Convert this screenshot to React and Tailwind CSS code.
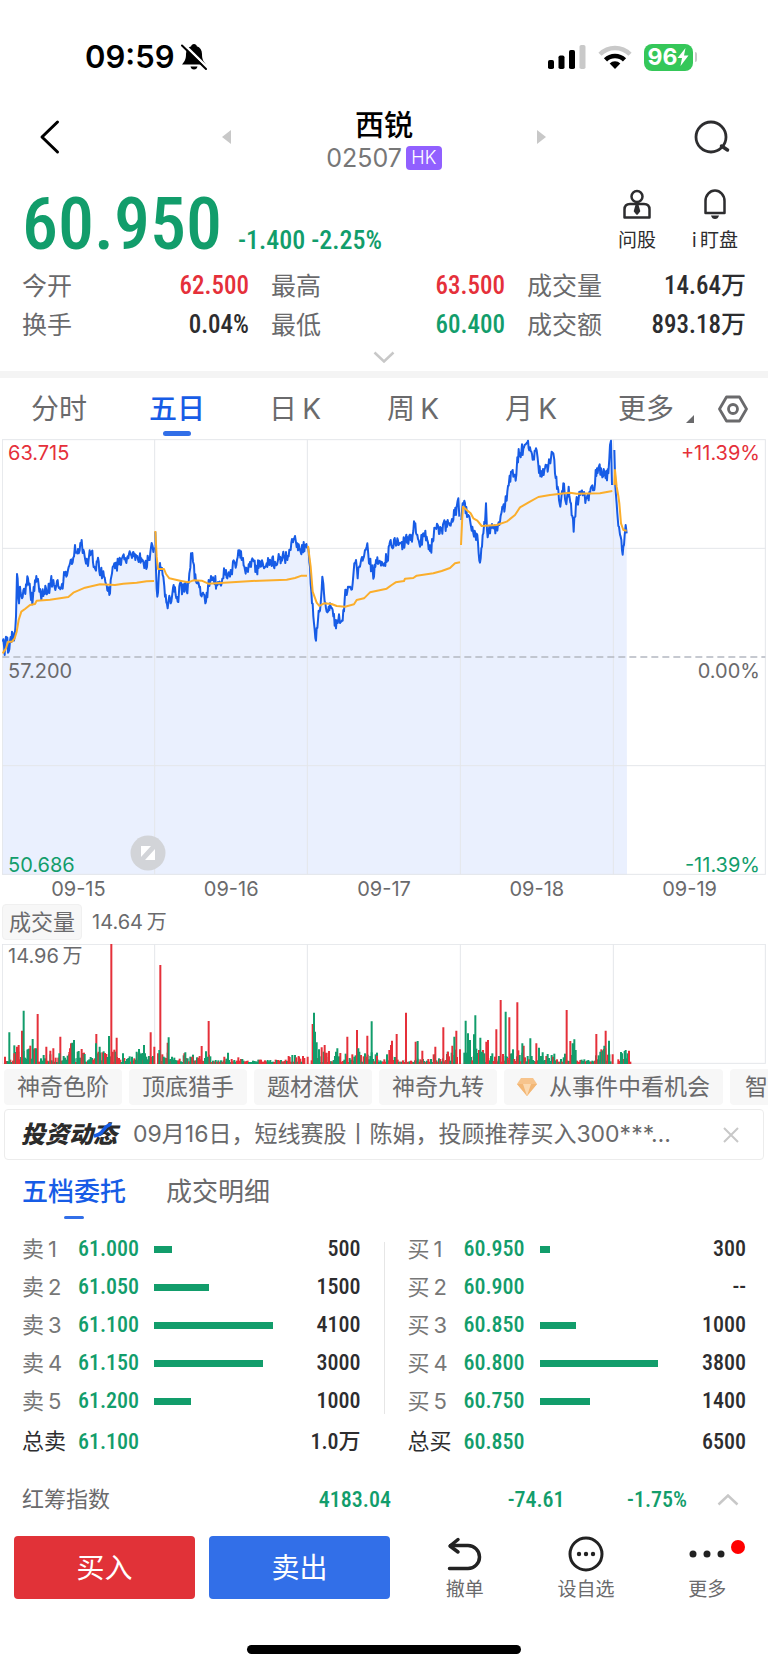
import React, { useMemo, useState } from 'react';
import clsx from 'clsx';

const NUM = "font-[family-name:'Roboto_Condensed',Roboto,'Noto_Sans_CJK_SC',sans-serif]";

const STATS = [
    [
        { label: '今开', value: '62.500', color: 'text-[#e5303a]' },
        { label: '最高', value: '63.500', color: 'text-[#e5303a]' },
        { label: '成交量', value: '14.64万', color: 'text-[#2d2d2f]' },
    ],
    [
        { label: '换手', value: '0.04%', color: 'text-[#2d2d2f]' },
        { label: '最低', value: '60.400', color: 'text-[#129d6b]' },
        { label: '成交额', value: '893.18万', color: 'text-[#2d2d2f]' },
    ],
];

const PERIODS = ['分时', '五日', '日\u2009K', '周\u2009K', '月\u2009K'];
const DATES = ['09-15', '09-16', '09-17', '09-18', '09-19'];
const CHIPS = ['神奇色阶', '顶底猎手', '题材潜伏', '神奇九转'];

const SELL = [
    { label: '卖', price: '61.000', volume: '500', share: 15 },
    { label: '卖', price: '61.050', volume: '1500', share: 46 },
    { label: '卖', price: '61.100', volume: '4100', share: 100 },
    { label: '卖', price: '61.150', volume: '3000', share: 92 },
    { label: '卖', price: '61.200', volume: '1000', share: 31 },
];

const BUY = [
    { label: '买', price: '60.950', volume: '300', share: 9 },
    { label: '买', price: '60.900', volume: '--', share: 0 },
    { label: '买', price: '60.850', volume: '1000', share: 31 },
    { label: '买', price: '60.800', volume: '3800', share: 100 },
    { label: '买', price: '60.750', volume: '1400', share: 43 },
];

// One series per trading day, x/y pairs in chart units
const PRICE_DAYS = [
    [8, 815, 14, 855, 18, 800, 26, 845, 36, 785, 44, 795, 48, 740, 51, 612, 57, 700, 60, 650, 66, 685, 74, 665, 84, 625, 93, 690, 99, 680, 109, 618, 116, 645, 124, 690, 132, 665, 142, 670, 152, 635, 162, 645, 175, 650, 190, 635, 197, 605, 210, 580, 222, 560, 225, 525, 232, 550, 243, 525, 252, 545, 262, 575, 275, 545, 283, 590, 292, 575, 302, 610, 312, 620, 320, 645, 328, 675, 334, 620, 345, 595, 355, 580, 365, 565, 385, 565, 398, 548, 408, 555, 418, 570, 428, 570, 435, 590, 445, 570, 453, 532, 462, 532],
    [466, 485, 468, 600, 472, 680, 478, 590, 482, 600, 490, 620, 495, 680, 503, 715, 510, 685, 516, 680, 521, 645, 527, 675, 533, 695, 540, 640, 548, 660, 555, 640, 562, 670, 568, 610, 573, 550, 579, 575, 584, 630, 592, 640, 600, 650, 607, 670, 613, 675, 618, 695, 624, 650, 635, 630, 650, 640, 665, 640, 672, 595, 682, 625, 692, 600, 705, 580, 717, 555, 727, 570, 735, 600, 748, 590, 757, 565, 770, 600, 780, 575, 800, 580, 825, 575, 840, 560, 860, 565, 872, 540, 883, 505, 892, 520, 900, 540, 915, 525, 921, 535],
    [924, 530, 930, 590, 936, 700, 942, 760, 948, 812, 954, 750, 962, 700, 967, 620, 972, 670, 978, 715, 990, 700, 998, 720, 1008, 775, 1015, 750, 1024, 755, 1030, 720, 1038, 660, 1050, 650, 1058, 640, 1063, 580, 1068, 570, 1073, 625, 1080, 590, 1090, 565, 1097, 540, 1102, 520, 1107, 580, 1115, 590, 1122, 620, 1128, 570, 1145, 575, 1162, 565, 1170, 515, 1190, 525, 1215, 515, 1238, 495, 1244, 460, 1252, 495, 1260, 530, 1270, 490, 1280, 500, 1290, 543, 1298, 515, 1305, 475, 1325, 475, 1345, 460, 1358, 455, 1362, 420, 1368, 435, 1375, 385, 1378, 440],
    [1384, 450, 1388, 400, 1395, 400, 1403, 440, 1410, 450, 1417, 470, 1422, 500, 1432, 495, 1436, 550, 1440, 578, 1446, 530, 1450, 490, 1455, 460, 1458, 400, 1461, 480, 1470, 490, 1480, 475, 1490, 480, 1500, 455, 1507, 410, 1515, 410, 1522, 365, 1533, 305, 1540, 320, 1549, 315, 1552, 262, 1560, 250, 1570, 235, 1578, 222, 1590, 232, 1600, 265, 1608, 235, 1615, 285, 1625, 320, 1633, 300, 1645, 290, 1655, 245, 1660, 250, 1665, 310, 1673, 350, 1681, 410, 1690, 340, 1697, 395, 1706, 350, 1713, 400, 1721, 485, 1728, 400, 1740, 375, 1750, 370, 1760, 385, 1770, 370, 1783, 360, 1787, 300, 1795, 295, 1805, 310, 1815, 315, 1825, 310, 1830, 225, 1833, 212, 1836, 345],
    [1843, 240, 1846, 350, 1852, 430, 1857, 470, 1862, 500, 1866, 540, 1870, 530, 1874, 495, 1877, 465, 1880, 490],
];

const AVERAGE_DAYS = [
    '8,850 18,835 24,815 36,815 44,805 50,785 56,750 64,725 75,717 90,705 105,702 110,692 150,689 205,681 220,668 255,653 300,643 345,645 370,641 410,638 440,634 462,633',
    '466,483 470,560 474,597 492,597 498,612 508,625 540,632 565,637 580,631 605,632 625,641 660,639 720,635 780,632 860,629 885,624 905,617 921,617',
    '924,528 932,590 938,665 950,698 958,708 972,700 995,702 1010,708 1035,710 1062,703 1070,690 1092,685 1110,667 1160,656 1175,645 1187,637 1212,633 1215,626 1240,624 1250,617 1300,610 1325,603 1350,594 1365,580 1380,577',
    '1383,525 1387,440 1389,410 1400,420 1412,430 1420,445 1432,452 1445,468 1490,465 1520,455 1545,435 1560,412 1590,395 1615,381 1650,375 1695,370 1710,368 1730,371 1800,370 1837,363',
    '1843,345 1845,300 1850,350 1855,378 1858,400 1863,460 1870,480 1880,482',
];

// Peaks as x/top pairs
const RED_PEAKS = [15, 500, 43, 490, 51, 470, 56, 465, 66, 422, 104, 475, 113, 372, 139, 470, 151, 482, 160, 475, 181, 440, 210, 475, 213, 460, 245, 477, 289, 432, 296, 485, 334, 162, 338, 485, 350, 443, 452, 427, 463, 470, 474, 490, 481, 225, 503, 458, 553, 490, 577, 500, 605, 468, 626, 393, 673, 500, 866, 498, 896, 498, 923, 500, 938, 402, 965, 472, 974, 465, 980, 488, 1042, 440, 1071, 420, 1102, 437, 1131, 497, 1168, 480, 1173, 465, 1176, 452, 1190, 432, 1218, 368, 1247, 455, 1267, 482, 1306, 470, 1330, 412, 1344, 485, 1357, 467, 1369, 422, 1380, 478, 1459, 455, 1464, 450, 1489, 418, 1502, 330, 1528, 382, 1552, 337, 1571, 467, 1609, 460, 1700, 360, 1711, 453, 1789, 432, 1817, 422, 1838, 493, 1887, 482];
const GREEN_PEAKS = [28, 427, 71, 362, 83, 478, 98, 447, 108, 475, 178, 490, 217, 458, 222, 450, 233, 485, 254, 492, 288, 460, 299, 470, 327, 438, 369, 490, 396, 500, 410, 485, 417, 477, 432, 465, 435, 490, 478, 480, 506, 442, 516, 500, 556, 487, 618, 484, 623, 500, 684, 488, 942, 368, 945, 425, 950, 457, 957, 478, 1008, 485, 1012, 475, 1075, 475, 1078, 485, 1115, 394, 1253, 453, 1363, 440, 1397, 392, 1404, 430, 1410, 450, 1422, 433, 1426, 376, 1441, 443, 1447, 485, 1517, 365, 1567, 460, 1591, 445, 1617, 473, 1628, 487, 1718, 460, 1723, 448, 1727, 480, 1801, 485, 1813, 467, 1827, 452, 1866, 490, 1874, 483, 1877, 480];

// Typical trade size between the peaks: from, to, height
const VOLUME_LEVELS = [
    [12, 40, 22], [40, 120, 52], [120, 205, 24], [205, 300, 34], [300, 350, 40], [350, 400, 18], [400, 460, 28],
    [472, 520, 30], [520, 640, 24], [640, 740, 14], [740, 850, 8], [850, 912, 22],
    [932, 990, 50], [990, 1060, 28], [1060, 1130, 30], [1130, 1190, 26], [1190, 1290, 12], [1290, 1340, 24], [1340, 1372, 50],
    [1390, 1450, 42], [1450, 1520, 30], [1520, 1600, 40], [1600, 1680, 26], [1680, 1730, 40], [1730, 1785, 8], [1785, 1832, 44],
    [1852, 1892, 34],
];

const createRandom = (seed) => {
    let state = seed;
    return () => {
        state = (state * 16807) % 2147483647;
        return state / 2147483647;
    };
};

const buildPricePath = (flat, random) => {
    const points = [];
    for (let i = 0; i < flat.length; i += 2) {
        const [x, y, nextX, nextY] = flat.slice(i, i + 4);
        points.push(`${x},${y}`);
        if (nextX === undefined) {
            break;
        }
        const steps = Math.floor((nextX - x) / 2);
        for (let s = 1; s < steps; s += 1) {
            const t = s / steps;
            const jitter = (random() - 0.5) * 40;
            const nextPointY = Math.max(212, Math.round(y + (nextY - y) * t + jitter));
            points.push(`${Math.round(x + (nextX - x) * t)},${nextPointY}`);
        }
    }
    return points.join(' ');
};

const PriceChart = () => {
    const lines = useMemo(() => {
        const random = createRandom(77);
        return PRICE_DAYS.map((day) => buildPricePath(day, random));
    }, []);

    return (
        <div className="relative h-[436px] text-xl leading-6">
            <svg className="block h-full w-full" viewBox="6 207 2292 1308" preserveAspectRatio="none" aria-hidden="true">
                <polygon points={`6,1515 ${lines.join(' ')} 1881,1515`} fill="#eaf0fe" />
                <g stroke="#e4e6ea" strokeWidth="3" fill="none">
                    <rect x="7" y="209" width="2289" height="1304" />
                    <path d="M7 535H2296M7 1187H2296M464 209V1513M922 209V1513M1381 209V1513M1840 209V1513" />
                </g>
                <path d="M7 861H2296" stroke="#b4b8c1" strokeWidth="4" strokeDasharray="21 12" fill="none" />
                {lines.map((line) => (
                    <polyline key={line} points={line} fill="none" stroke="#175ce6" strokeWidth="6" strokeLinejoin="round" />
                ))}
                {AVERAGE_DAYS.map((line) => (
                    <polyline key={line} points={line} fill="none" stroke="#fbae2c" strokeWidth="6" strokeLinejoin="round" />
                ))}
            </svg>
            <span className="absolute top-0.5 left-1.5 text-[#e5303a]">63.715</span>
            <span className="absolute top-0.5 right-1.5 text-[#e5303a]">+11.39%</span>
            <span className="absolute top-[220px] left-1.5 text-[#6a6a6c]">57.200</span>
            <span className="absolute top-[220px] right-1.5 text-[#6a6a6c]">0.00%</span>
            <span className="absolute -bottom-0.5 left-1.5 text-[#129d6b]">50.686</span>
            <span className="absolute right-1.5 -bottom-0.5 text-[#129d6b]">-11.39%</span>
            <button type="button" aria-label="全屏" className="absolute bottom-1 left-32 h-9 w-9">
                <svg viewBox="0 0 36 36" className="h-full w-full">
                    <circle cx="18" cy="18" r="17.5" fill="#d2d4d8" />
                    <path d="M11 11H21L11 22ZM25 14V25H15Z" fill="#fff" />
                </svg>
            </button>
        </div>
    );
};

const VolumeChart = () => {
    const bars = useMemo(() => {
        const random = createRandom(4021);
        const list = [];
        VOLUME_LEVELS.forEach(([from, to, level]) => {
            for (let x = from; x < to; x += 4) {
                const height = Math.round(6 + level * random() ** 1.5);
                list.push({ x, height, red: random() < 0.42 });
            }
        });
        return list;
    }, []);

    const peakPath = (peaks) => {
        let d = '';
        for (let i = 0; i < peaks.length; i += 2) {
            d += `M${peaks[i]} 522V${peaks[i + 1]}`;
        }
        return d;
    };

    return (
        <div className="relative h-[120px]">
            <svg className="block h-full w-full" viewBox="6 162 2292 360" preserveAspectRatio="none" aria-hidden="true">
                <g stroke="#e4e6ea" strokeWidth="3" fill="none">
                    <rect x="7" y="163" width="2289" height="357" />
                    <path d="M464 163V520M922 163V520M1381 163V520M1840 163V520" />
                </g>
                {bars.map((bar) => (
                    <rect key={bar.x} x={bar.x} y={522 - bar.height} width="6" height={bar.height} fill={bar.red ? '#e5303a' : '#129d6b'} />
                ))}
                <path d={peakPath(RED_PEAKS)} stroke="#e5303a" strokeWidth="6" />
                <path d={peakPath(GREEN_PEAKS)} stroke="#129d6b" strokeWidth="6" />
            </svg>
            <span className="absolute top-0 left-1.5 text-xl leading-6 text-[#6a6a6c]">14.96{'\u2009'}万</span>
        </div>
    );
};

const StatusBar = () => (
    <div className="flex h-[101px] items-start justify-between pt-[39px] pr-[71px] pl-[85px]">
        <div className="flex h-9 items-center gap-1.5">
            <span className="text-[31px] leading-9 font-semibold text-black">09:59</span>
            <svg viewBox="0 0 26 28" className="h-7 w-[26px]">
                <path d="M13 1C14.6 1 15.6 2 15.8 3.2C19 4.300 21 7 21 11C21 16 22 18 25 21.500H1C4 18 5 16 5 11C5 7 7 4.300 10.200 3.200C10.400 2 11.400 1 13 1Z" fill="#000" />
                <path d="M9.500 23.500H16.500C16 25.500 15 26.500 13 26.500S10 25.500 9.500 23.500Z" fill="#000" />
                <path d="M2.500 1L26 24" stroke="#fff" strokeWidth="2.500" />
                <path d="M1 2.500L25 26" stroke="#000" strokeWidth="2" strokeLinecap="round" />
            </svg>
        </div>
        <div className="flex h-9 items-center gap-3">
            <svg viewBox="0 0 38 24" className="h-6 w-[38px]">
                <rect x="0" y="15" width="6" height="9" rx="1.800" />
                <rect x="10.500" y="10.500" width="6" height="13.500" rx="1.800" />
                <rect x="21" y="5" width="6" height="19" rx="1.800" />
                <rect x="31.500" y="0" width="6" height="24" rx="1.800" fill="#c9c9c9" />
            </svg>
            <svg viewBox="0 0 34 24" className="h-6 w-[34px]" fill="none" strokeWidth="4.500">
                <path d="M2 9.300A21 21 0 0 1 32 9.300" stroke="#c9c9c9" />
                <path d="M7.500 14.800A13.500 13.500 0 0 1 26.500 14.800" stroke="#000" />
                <path d="M17 24L11.700 18.500A7.500 7.500 0 0 1 22.300 18.500Z" fill="#000" />
            </svg>
            <div className="flex items-center gap-0.5">
                <div className="flex h-[27px] w-[49px] items-center justify-center rounded-lg bg-[#35c759] text-white">
                    <span className="text-[23px] leading-none font-bold">96</span>
                    <svg viewBox="0 0 12 18" className="h-[18px] w-3">
                        <path d="M8.500 0L0.500 10H5L3.500 18L11.500 7.500H7Z" fill="#fff" />
                    </svg>
                </div>
                <span className="h-2.5 w-0.5 rounded-r-sm bg-[#c9c9c9]" />
            </div>
        </div>
    </div>
);

const Header = () => (
    <header className="flex h-[72px] items-center justify-between px-[38px]">
        <button type="button" aria-label="返回">
            <svg viewBox="0 0 36 36" className="h-9 w-9">
                <path d="M19.500 3L4 18L19.500 33" fill="none" stroke="#000" strokeWidth="3" strokeLinecap="round" strokeLinejoin="round" />
            </svg>
        </button>
        <div className="flex w-[324px] items-center justify-between">
            <button type="button" aria-label="上一只">
                <svg viewBox="0 0 9 14" className="h-3.5 w-[9px]"><path d="M9 0V14L0 7Z" fill="#c8c8c8" /></svg>
            </button>
            <div className="flex flex-col items-center pt-2.5">
                <h1 className="text-[29px] leading-8 font-medium text-black">西锐</h1>
                <div className="flex items-center gap-1">
                    <span className="text-[25px] leading-8 text-[#777]">02507</span>
                    <span className="flex h-6 w-9 items-center justify-center rounded-sm bg-[#9160ff] text-lg font-light text-white">HK</span>
                </div>
            </div>
            <button type="button" aria-label="下一只">
                <svg viewBox="0 0 9 14" className="h-3.5 w-[9px]"><path d="M0 0V14L9 7Z" fill="#c8c8c8" /></svg>
            </button>
        </div>
        <button type="button" aria-label="搜索">
            <svg viewBox="0 0 36 36" className="h-9 w-9">
                <circle cx="17" cy="18" r="15" fill="none" stroke="#2d2d2f" strokeWidth="2.800" />
                <path d="M27.500 27L33.500 31" stroke="#2d2d2f" strokeWidth="3.500" strokeLinecap="round" />
            </svg>
        </button>
    </header>
);

const Quote = () => (
    <section className="flex flex-col pt-[13px]">
        <div className="flex h-[78px] items-end justify-between pr-[30px] pl-[22px]">
            <div className={clsx(NUM, 'flex items-baseline gap-4 text-[#129d6b]')}>
                <span className="text-[72px] leading-[78px] font-medium">60.950</span>
                <span className="text-[26px] font-medium">-1.400 -2.25%</span>
            </div>
            <div className="flex items-end gap-9 pb-[11px] text-[19px] leading-6 text-[#2d2d2f]">
                <button type="button" className="flex flex-col items-center gap-2.5">
                    <svg viewBox="0 0 28 30" className="h-[30px] w-7" fill="none" stroke="#2d2d2f" strokeWidth="2.500" strokeLinejoin="round">
                        <circle cx="14" cy="7.500" r="5.500" />
                        <path d="M7 15H21Q26.500 15 26.500 20.500V28.500H1.500V20.500Q1.500 15 7 15Z" />
                        <path d="M14 15L16 22L14 24.500L12 22Z" fill="#2d2d2f" />
                    </svg>
                    问股
                </button>
                <button type="button" className="flex flex-col items-center gap-2.5">
                    <svg viewBox="0 0 28 30" className="h-[30px] w-7" fill="none" stroke="#2d2d2f" strokeWidth="2.500" strokeLinejoin="round">
                        <path d="M4.500 24V12A9.500 10.500 0 0 1 23.500 12V24Z" />
                        <path d="M10 26.500H18Q17 30 14 30T10 26.500Z" fill="#2d2d2f" stroke="none" />
                    </svg>
                    i{'\u2009'}盯盘
                </button>
            </div>
        </div>
        <div className="flex flex-col gap-[3px] px-[22px] pt-1">
            {STATS.map((row) => (
                <dl key={row[0].label} className="grid grid-cols-[227fr_234fr_219fr] gap-x-[22px] text-[25px] leading-9">
                    {row.map((item) => (
                        <div key={item.label} className="flex items-center justify-between">
                            <dt className="text-[#6a6a6c]">{item.label}</dt>
                            <dd className={clsx(NUM, 'font-medium', item.color)}>{item.value}</dd>
                        </div>
                    ))}
                </dl>
            ))}
        </div>
        <button type="button" aria-label="展开" className="flex h-7 items-end justify-center pb-2">
            <svg viewBox="0 0 22 12" className="h-3 w-[22px]">
                <path d="M1.500 1.500L11 10.500L20.500 1.500" fill="none" stroke="#c8c8c8" strokeWidth="2.500" />
            </svg>
        </button>
    </section>
);

const PeriodTabs = () => {
    const [active, setActive] = useState('五日');

    return (
        <nav className="flex h-[61px] items-stretch pr-5 text-[28px] leading-8 text-[#6a6a6c]">
            {PERIODS.map((period) => (
                <button
                    key={period}
                    type="button"
                    onClick={() => setActive(period)}
                    className={clsx(
                        'flex w-[118px] flex-col items-center gap-1.5 pt-[15px]',
                        active === period && 'font-medium text-[#175ce6]',
                    )}
                >
                    {period}
                    {active === period && <span className="h-[5px] w-7 rounded-full bg-[#326fe8]" />}
                </button>
            ))}
            <button type="button" className="ml-auto flex items-start gap-3 pt-[15px]">
                更多
                <svg viewBox="0 0 8 8" className="mt-[22px] h-2 w-2"><path d="M8 0V8H0Z" fill="#6a6a6c" /></svg>
            </button>
            <button type="button" aria-label="设置" className="ml-6">
                <svg viewBox="0 0 30 28" className="h-7 w-[30px]" fill="none" stroke="#6a6a6c" strokeWidth="2.800" strokeLinejoin="round">
                    <path d="M8.500 2H21.500L28.500 14L21.500 26H8.500L1.500 14Z" />
                    <circle cx="15" cy="14" r="4.500" />
                </svg>
            </button>
        </nav>
    );
};

const OrderTable = ({ rows, label, total }) => (
    <table aria-label={label} className={clsx(NUM, 'flex-1 table-fixed text-[22px] leading-8')}>
        <colgroup>
            <col className="w-14" />
            <col className="w-[76px]" />
            <col />
            <col className="w-[88px]" />
        </colgroup>
        <tbody>
            {rows.map((row, index) => (
                <tr key={row.price} className="h-[38px]">
                    <th scope="row" className="p-0 text-left font-[family-name:Inter,'Noto_Sans_CJK_SC',sans-serif] font-normal text-[#777]">
                        {row.label}{'\u2009'}{index + 1}
                    </th>
                    <td className="p-0 font-medium text-[#129d6b]">{row.price}</td>
                    <td className="p-0">
                        <div className="h-[7px] bg-[#129d6b]" style={{ width: `${row.share}%` }} />
                    </td>
                    <td className="p-0 text-right font-medium text-[#2d2d2f]">{row.volume}</td>
                </tr>
            ))}
            <tr className="h-[43px]">
                <th scope="row" className="p-0 text-left font-normal text-[#2d2d2f]">{total.label}</th>
                <td className="p-0 font-medium text-[#129d6b]">{total.price}</td>
                <td className="p-0" />
                <td className="p-0 text-right font-medium text-[#2d2d2f]">{total.volume}</td>
            </tr>
        </tbody>
    </table>
);

const BottomBar = () => (
    <footer>
        <div className="grid grid-cols-[376fr_364fr] items-start gap-3.5 pl-3.5">
            <div className="grid grid-cols-2 gap-3.5 text-[28px] text-white">
                <button type="button" className="h-[63px] rounded-sm bg-[#e13238]">买入</button>
                <button type="button" className="h-[63px] rounded-sm bg-[#326fe8]">卖出</button>
            </div>
            <div className="grid grid-cols-3 text-[19px] leading-6 text-[#6a6a6c]">
                <button type="button" className="flex flex-col items-center gap-1.5">
                    <svg viewBox="0 0 36 36" className="h-9 w-9" fill="none" stroke="#222" strokeWidth="3.500" strokeLinecap="round" strokeLinejoin="round">
                        <path d="M11 3.500L3 10L11 16" />
                        <path d="M3.500 9.500H21A11.500 11.500 0 0 1 21 32.500H2.500" />
                    </svg>
                    撤单
                </button>
                <button type="button" className="flex flex-col items-center gap-1.5">
                    <svg viewBox="0 0 36 36" className="h-9 w-9" fill="#222">
                        <circle cx="18" cy="18" r="16" fill="none" stroke="#222" strokeWidth="3" />
                        <circle cx="11" cy="18" r="2.200" />
                        <circle cx="18" cy="18" r="2.200" />
                        <circle cx="25" cy="18" r="2.200" />
                    </svg>
                    设自选
                </button>
                <button type="button" className="flex flex-col items-center gap-1.5">
                    <span className="relative">
                        <svg viewBox="0 0 36 36" className="block h-9 w-9" fill="#222">
                            <circle cx="4" cy="18" r="3.500" />
                            <circle cx="18" cy="18" r="3.500" />
                            <circle cx="32" cy="18" r="3.500" />
                        </svg>
                        <span className="absolute top-1 -right-5 h-3.5 w-3.5 rounded-full bg-[#ff0000]" />
                    </span>
                    更多
                </button>
            </div>
        </div>
        <div className="flex justify-center pt-[43px] pb-[15px]">
            <span className="h-[9px] w-[274px] rounded-full bg-black" />
        </div>
    </footer>
);

const App = () => {
    const [showNews, setShowNews] = useState(true);

    return (
        <main className="w-full overflow-hidden bg-white font-[family-name:Inter,'Noto_Sans_CJK_SC',sans-serif] whitespace-nowrap">
            <StatusBar />
            <Header />
            <Quote />
            <div className="h-[7px] bg-[#f4f4f4]" />
            <PeriodTabs />

            <section className="px-0.5">
                <PriceChart />
                <div className="grid h-7 grid-cols-5 text-center text-xl leading-7 text-[#6a6a6c]">
                    {DATES.map((date) => (
                        <span key={date}>{date}</span>
                    ))}
                </div>
                <div className="flex items-center gap-2.5 pt-px pb-1 text-[#6a6a6c]">
                    <button type="button" className="h-9 rounded-sm border border-[#f0f0f0] bg-[#f7f7f7] px-1.5 text-[22px] leading-8">成交量</button>
                    <span className="text-xl">14.64{'\u2009'}万</span>
                </div>
                <VolumeChart />
            </section>

            <div className="flex gap-[7px] overflow-hidden pt-[5px] pl-1 text-[23px] leading-9 text-[#6a6a6c]">
                {CHIPS.map((chip) => (
                    <button key={chip} type="button" className="shrink-0 rounded-sm bg-[#f7f7f7] px-[13px]">{chip}</button>
                ))}
                <button type="button" className="flex shrink-0 items-center gap-3 rounded-sm bg-[#f7f7f7] px-[13px]">
                    <svg viewBox="0 0 20 18" className="h-[18px] w-5">
                        <path d="M4 0H16L20 6L10 18L0 6Z" fill="#f7c48c" />
                        <path d="M0 6H20L10 18Z" fill="#f3b775" />
                        <path d="M6 6H14L10 18Z" fill="#fbd9b0" />
                    </svg>
                    从事件中看机会
                </button>
                <button type="button" className="shrink-0 rounded-sm bg-[#f7f7f7] px-[15px]">智能</button>
            </div>

            {showNews && (
                <div className="mx-1 mt-1 flex h-[51px] items-center rounded border border-[#ececec] pr-6 pl-4 text-[#6a6a6c]">
                    <span className="relative text-2xl font-black text-[#2b2b2b] italic">
                        投资动态
                        <svg viewBox="0 0 20 16" className="absolute top-1 right-1 h-4 w-5">
                            <path d="M1 13Q7 12 10 7.500T18 1" fill="none" stroke="#175ce6" strokeWidth="3.500" />
                        </svg>
                    </span>
                    <a href="#news" className="ml-4 text-[23px]">09月16日，短线赛股丨陈娟，投顾推荐买入300***…</a>
                    <button type="button" aria-label="关闭" onClick={() => setShowNews(false)} className="ml-auto">
                        <svg viewBox="0 0 16 16" className="h-4 w-4"><path d="M1 1L15 15M15 1L1 15" stroke="#c8c8c8" strokeWidth="2" /></svg>
                    </button>
                </div>
            )}

            <div className="flex gap-10 px-[22px] pt-3.5 text-[26px] leading-9 text-[#6a6a6c]">
                <button type="button" className="flex flex-col items-center gap-1.5 font-medium text-[#175ce6]">
                    五档委托
                    <span className="h-[3px] w-5 rounded-full bg-[#326fe8]" />
                </button>
                <button type="button" className="self-start">成交明细</button>
            </div>

            <section className="flex gap-[23px] px-[22px] pt-[11px]">
                <OrderTable rows={SELL} label="卖盘" total={{ label: '总卖', price: '61.100', volume: '1.0万' }} />
                <div className="mt-3 h-[172px] w-px bg-[#e6e6e6]" />
                <OrderTable rows={BUY} label="买盘" total={{ label: '总买', price: '60.850', volume: '6500' }} />
            </section>

            <section className="flex h-[73px] items-center pr-[29px] pl-[22px]">
                <span className="text-[22px] text-[#6a6a6c]">红筹指数</span>
                <div className={clsx(NUM, 'grid flex-1 grid-cols-[280fr_173fr_122fr] text-right text-[22px] font-medium text-[#129d6b]')}>
                    <span>4183.04</span>
                    <span>-74.61</span>
                    <span>-1.75%</span>
                </div>
                <button type="button" aria-label="收起" className="ml-[30px]">
                    <svg viewBox="0 0 22 12" className="h-3 w-[22px]">
                        <path d="M1.500 10.500L11 1.500L20.500 10.500" fill="none" stroke="#c8c8c8" strokeWidth="2.500" />
                    </svg>
                </button>
            </section>

            <BottomBar />
        </main>
    );
};

export default App;
